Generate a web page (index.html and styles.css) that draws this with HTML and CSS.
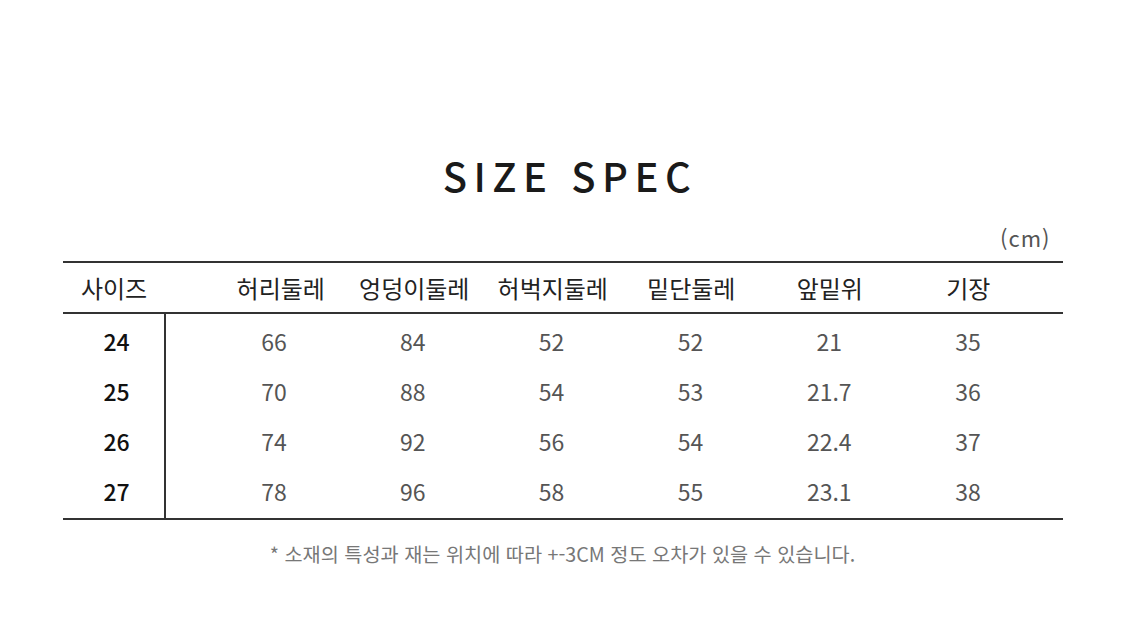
FILE: index.html
```html
<!DOCTYPE html>
<html lang="ko">
<head>
<meta charset="utf-8">
<title>SIZE SPEC</title>
<link rel="stylesheet" href="styles.css">
</head>
<body>
<main class="page">
  <h1 class="title">SIZE SPEC</h1>
  <div class="unit">(cm)</div>
  <section class="spec">
    <div class="head">
      <div class="size-col">사이즈</div>
      <div class="cols">
        <div class="nudge">허리둘레</div>
        <div>엉덩이둘레</div>
        <div>허벅지둘레</div>
        <div>밑단둘레</div>
        <div>앞밑위</div>
        <div>기장</div>
      </div>
    </div>
    <div class="body">
      <div class="sizes">
        <div>24</div>
        <div>25</div>
        <div>26</div>
        <div>27</div>
      </div>
      <div class="data">
        <div class="cols"><div>66</div><div>84</div><div>52</div><div>52</div><div>21</div><div>35</div></div>
        <div class="cols"><div>70</div><div>88</div><div>54</div><div>53</div><div>21.7</div><div>36</div></div>
        <div class="cols"><div>74</div><div>92</div><div>56</div><div>54</div><div>22.4</div><div>37</div></div>
        <div class="cols"><div>78</div><div>96</div><div>58</div><div>55</div><div>23.1</div><div>38</div></div>
      </div>
    </div>
  </section>
  <p class="note">* 소재의 특성과 재는 위치에 따라 +-3CM 정도 오차가 있을 수 있습니다.</p>
</main>
</body>
</html>
```
FILE: styles.css
```css
html, body {
  margin: 0;
  padding: 0;
  background: #ffffff;
}

body {
  font-family: "Noto Sans CJK KR", "Noto Sans", sans-serif;
  color: #222;
}

.page {
  width: 1000px;
  margin: 0 auto;
  padding-top: 151px;
}

.title {
  margin: 0;
  font-size: 40px;
  line-height: 48px;
  font-weight: 500;
  letter-spacing: 6.5px;
  text-align: center;
  padding-left: 15px;
  color: #1a1a1a;
}

.unit {
  margin-top: 25px;
  font-size: 22px;
  line-height: 26px;
  text-align: right;
  padding-right: 12px;
  color: #555;
  letter-spacing: 1px;
}

.spec {
  margin-top: 11px;
  border-top: 2px solid #333;
  border-bottom: 2px solid #333;
}

.head {
  display: flex;
  height: 49px;
  align-items: center;
  border-bottom: 2px solid #333;
  font-size: 24px;
  line-height: 49px;
  color: #222;
}

.size-col {
  width: 103px;
  text-align: center;
}

.cols {
  flex: 1;
  display: grid;
  grid-template-columns: repeat(6, 1fr);
  padding-left: 41px;
  padding-right: 25px;
  text-align: center;
}

.head .nudge {
  padding-left: 10px;
}

.body {
  display: flex;
}

.sizes {
  width: 103px;
  box-sizing: border-box;
  padding: 2px 0 2px 7px;
  border-right: 2px solid #333;
  font-size: 23px;
  line-height: 50px;
  color: #111;
  text-align: center;
  font-weight: 500;
}

.data {
  flex: 1;
  padding: 2px 0;
  font-size: 23px;
  line-height: 50px;
  color: #555;
}

.data .cols {
  padding-left: 39px;
}

.note {
  margin: 20px 0 0;
  font-size: 19.7px;
  line-height: 28px;
  text-align: center;
  color: #777;
}
```
